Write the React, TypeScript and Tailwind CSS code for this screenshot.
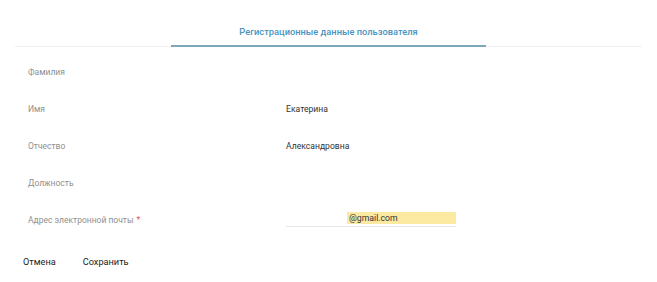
const rows: { label: string; value?: string; required?: boolean }[] = [
  { label: 'Фамилия' },
  { label: 'Имя', value: 'Екатерина' },
  { label: 'Отчество', value: 'Александровна' },
  { label: 'Должность' },
  { label: 'Адрес электронной почты', required: true },
];

export default function App() {
  return (
    <div
      className="w-[657px] h-[282px] bg-white px-[15px]"
      style={{ fontFamily: 'Roboto, "Liberation Sans", sans-serif' }}
    >
      <div className="flex justify-center border-b border-[#f0f0f0]">
        <div className="w-[315px] -mb-px border-b-2 border-[#7ea7bb] pt-[26px] pb-[7px] text-center text-[9.3px] leading-[12px] font-medium text-[#4a94c0]">
          Регистрационные данные пользователя
        </div>
      </div>

      <div className="pt-[7px] pl-[13px]">
        {rows.map((row) => (
          <div key={row.label} className="flex h-[37px] items-center">
            <div className="w-[258px] text-[8.5px] text-[#8f8f8f]">
              {row.label}
              {row.required && <span className="ml-[3px] text-[#d9534f]">*</span>}
            </div>
            {row.required ? (
              <div className="-mt-[2px] flex w-[170px] justify-end border-b border-[#e6e6e6] pb-[2px]">
                <span className="w-[109px] bg-[#fce9a2] pl-[2px] text-[8.7px] leading-[12px] text-[#333]">
                  @gmail.com
                </span>
              </div>
            ) : (
              <div className="text-[8.6px] text-[#333]">{row.value}</div>
            )}
          </div>
        ))}
      </div>

      <div className="mt-[16px] flex gap-[27px] pl-[8px] text-[9.2px] text-[#222]">
        <button type="button">Отмена</button>
        <button type="button">Сохранить</button>
      </div>
    </div>
  );
}
